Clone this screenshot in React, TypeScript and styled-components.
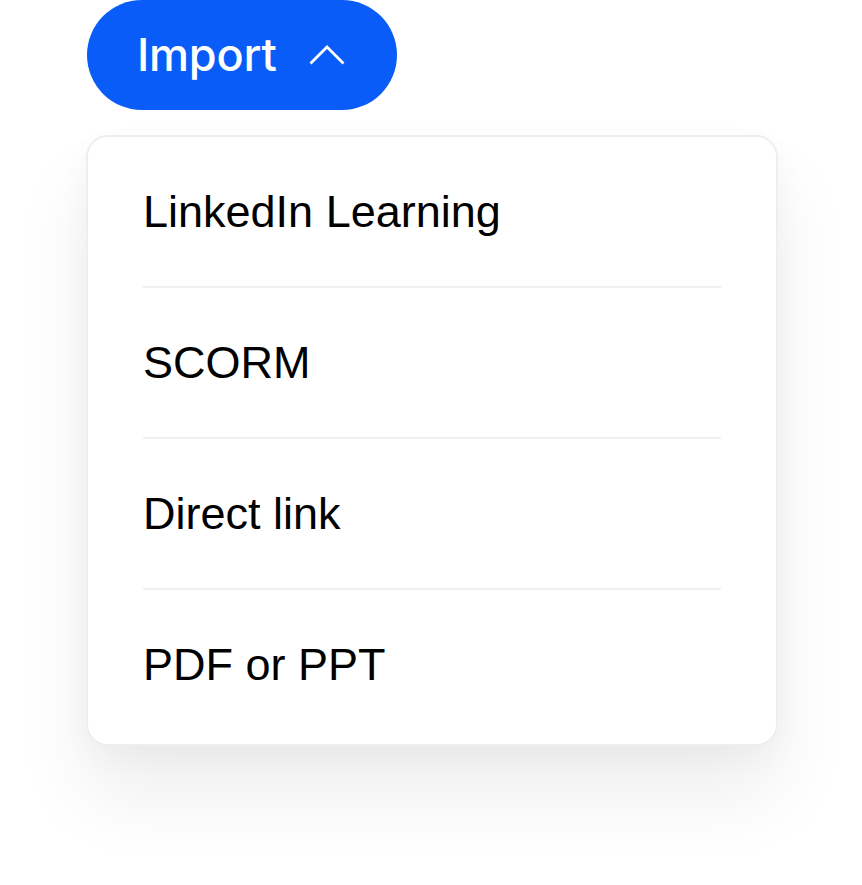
import React from "react";
import styled, { createGlobalStyle } from "styled-components";

const Global = createGlobalStyle`
  html, body { margin: 0; padding: 0; background: #ffffff; }
  body { font-family: "Liberation Sans", Arial, sans-serif; }
`;

const Page = styled.div`
  display: flex;
  flex-direction: column;
  align-items: flex-start;
  gap: 25px;
  padding: 0 0 140px 86px;
`;

const ImportButton = styled.button`
  display: flex;
  align-items: center;
  gap: 32px;
  height: 110px;
  margin-left: 1px;
  padding: 0 52px 2px 50px;
  border: none;
  border-radius: 55px;
  background: #0a5cf8;
  color: #ffffff;
  font-family: Inter, "Liberation Sans", Arial, sans-serif;
  font-weight: 500;
  font-size: 45px;
  letter-spacing: -0.2px;
  cursor: pointer;
`;

const Chevron = styled.svg`
  width: 36px;
  height: 20px;
  display: block;
  margin-top: 2px;
`;

const Card = styled.div`
  width: 692px;
  box-sizing: border-box;
  border: 2px solid #eeeeee;
  border-radius: 22px;
  background: #ffffff;
  padding: 0 55px 5px 55px;
  display: flex;
  flex-direction: column;
  box-shadow: 0 50px 80px rgba(0, 0, 0, 0.07), 0 10px 30px rgba(0, 0, 0, 0.03);
`;

const Item = styled.div`
  height: 149px;
  display: flex;
  align-items: center;
  font-size: 45px;
  color: #000000;
`;

const Divider = styled.div`
  height: 2px;
  background: #f0f0f0;
`;

const items = ["LinkedIn Learning", "SCORM", "Direct link", "PDF or PPT"];

export default function App() {
  return (
    <>
      <Global />
      <Page>
        <ImportButton>
          <span>Import</span>
          <Chevron viewBox="0 0 36 20" fill="none">
            <path d="M1.5 18.5 L18 2 L34.5 18.5" stroke="#ffffff" strokeWidth="2.8" />
          </Chevron>
        </ImportButton>
        <Card>
          {items.map((label, i) => (
            <React.Fragment key={label}>
              {i > 0 && <Divider />}
              <Item>{label}</Item>
            </React.Fragment>
          ))}
        </Card>
      </Page>
    </>
  );
}
